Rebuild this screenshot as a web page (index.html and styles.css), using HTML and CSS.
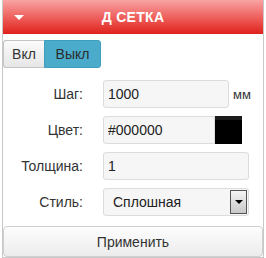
FILE: index.html
```
<!DOCTYPE html>
<html lang="ru">
<head>
  <meta charset="UTF-8">
  <title>Д Сетка</title>
  <link rel="stylesheet" href="styles.css">
</head>
<body>
  <div class="panel">
    <div class="header">
      <span class="caret"></span>
      <span class="title">Д СЕТКА</span>
    </div>
    <div class="toggle">
      <button class="tbtn">Вкл</button>
      <button class="tbtn active">Выкл</button>
    </div>
    <div class="form">
      <label>Шаг:</label>
      <div class="field">
        <input class="inp short" type="text" value="1000">
        <span class="unit">мм</span>
      </div>
      <label>Цвет:</label>
      <div class="field">
        <input class="inp color" type="text" value="#000000">
        <span class="swatch"></span>
      </div>
      <label>Толщина:</label>
      <div class="field">
        <input class="inp" type="text" value="1">
      </div>
      <label>Стиль:</label>
      <div class="field">
        <div class="select">
          <span class="sel-text">Сплошная</span>
          <span class="sel-arrow"></span>
        </div>
      </div>
    </div>
    <button class="apply">Применить</button>
  </div>
</body>
</html>
```
FILE: styles.css
```
body {
  margin: 0;
  background-color: #fff;
  font-family: "Liberation Sans", Arial, sans-serif;
  font-size: 14px;
  color: #333;
}
.panel {
  margin-left: 2px;
  width: 260px;
  height: 257px;
  border-left: 1px solid #c8c8c8;
  border-right: 1px solid #c8c8c8;
  border-bottom: 1px solid #c8c8c8;
}
.header {
  height: 34px;
  display: flex;
  align-items: center;
  background: linear-gradient(#f9a3a3, #e8413c 75%, #de221c);
  color: #fff;
}
.caret {
  width: 0;
  height: 0;
  margin-left: 11px;
  border-left: 5px solid transparent;
  border-right: 5px solid transparent;
  border-top: 5px solid #fff;
}
.title {
  flex: 1;
  text-align: center;
  margin-right: 21px;
  font-weight: bold;
  font-size: 14px;
  letter-spacing: 0.3px;
}
.toggle {
  display: flex;
  margin-top: 6px;
}
.tbtn {
  height: 28px;
  padding: 0;
  font-family: inherit;
  font-size: 14px;
  color: #333;
  border: 1px solid #c4c4c4;
  background: linear-gradient(#fbfbfb, #e6e6e6);
}
.tbtn:first-child {
  width: 41px;
  border-radius: 3px 0 0 3px;
  border-right: none;
}
.tbtn.active {
  width: 57px;
  background: #4aabcb;
  border-color: #3f9cbb;
  border-radius: 0 3px 3px 0;
  color: #2b2b2b;
}
.form {
  display: grid;
  grid-template-columns: 80px 146px;
  column-gap: 20px;
  row-gap: 8px;
  margin-top: 12px;
  align-items: center;
}
.form label {
  text-align: right;
  color: #333;
}
.field {
  display: flex;
  align-items: center;
  height: 28px;
}
.inp {
  box-sizing: border-box;
  width: 146px;
  height: 28px;
  padding: 0 4px;
  font-family: inherit;
  font-size: 14px;
  color: #222;
  border: 1px solid #dcdcdc;
  border-radius: 3px;
  background: #f6f6f6;
  outline: none;
}
.inp.short {
  width: 126px;
}
.inp.color {
  width: 112px;
  border-radius: 3px 0 0 3px;
}
.unit {
  margin-left: 4px;
  font-size: 13px;
  color: #333;
}
.swatch {
  width: 27px;
  height: 28px;
  background: linear-gradient(#1c1c1c 4px, #000 4px);
}
.select {
  box-sizing: border-box;
  width: 146px;
  height: 28px;
  display: flex;
  align-items: center;
  border: 1px solid #dcdcdc;
  border-radius: 3px;
  background: #f6f6f6;
}
.sel-text {
  flex: 1;
  padding-left: 9px;
  color: #222;
}
.sel-arrow {
  box-sizing: border-box;
  width: 17px;
  height: 24px;
  margin-right: 1px;
  border: 1px solid #555;
  background: linear-gradient(#f4f4f4, #c8c8c8);
  display: flex;
  align-items: center;
  justify-content: center;
}
.sel-arrow::after {
  content: "";
  border-left: 4px solid transparent;
  border-right: 4px solid transparent;
  border-top: 4px solid #000;
}
.apply {
  display: block;
  width: 260px;
  height: 31px;
  margin-top: 10px;
  padding: 0;
  font-family: inherit;
  font-size: 14px;
  color: #333;
  border: 1px solid #cfcfcf;
  border-radius: 4px;
  background: linear-gradient(#fdfdfd, #ececec);
}
```
